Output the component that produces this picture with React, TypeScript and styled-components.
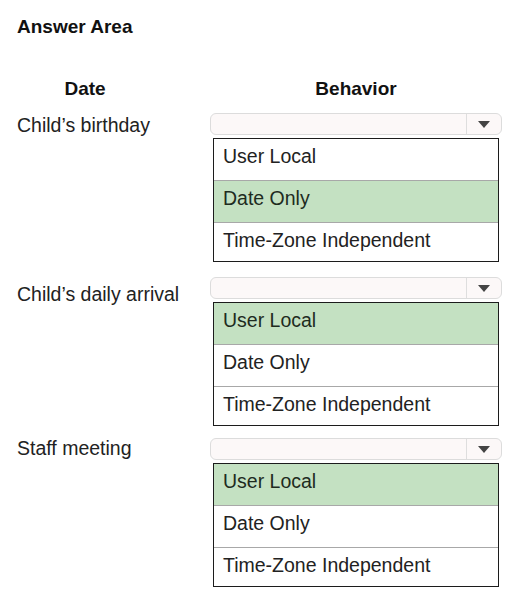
import React from "react";
import styled, { createGlobalStyle } from "styled-components";

const Global = createGlobalStyle`
  html, body { margin: 0; padding: 0; background: #ffffff; }
  body { font-family: "Liberation Sans", Arial, sans-serif; color: #222; }
`;

const Page = styled.div`
  width: 520px;
  height: 603px;
  box-sizing: border-box;
  padding: 16px 0 0 17px;
  background: #fff;
`;

const Title = styled.div`
  font-size: 19px;
  font-weight: 700;
  line-height: 22px;
  color: #111;
`;

const Grid = styled.div`
  margin-top: 40px;
  display: grid;
  grid-template-columns: 193px 292px;
  align-items: start;
`;

const HeaderRow = styled.div`
  display: contents;
`;

const DateHeader = styled.div`
  width: 136px;
  text-align: center;
  font-size: 19px;
  font-weight: 700;
  line-height: 22px;
  color: #111;
`;

const BehaviorHeader = styled.div`
  text-align: center;
  font-size: 19px;
  font-weight: 700;
  line-height: 22px;
  color: #111;
`;

const Label = styled.div<{ $offset: number }>`
  font-size: 19.5px;
  line-height: 22px;
  color: #222;
  margin-top: ${(p) => p.$offset}px;
`;

const Control = styled.div<{ $top: number }>`
  margin-top: ${(p) => p.$top}px;
  display: flex;
  flex-direction: column;
  gap: 3px;
`;

const Select = styled.div`
  height: 22px;
  box-sizing: border-box;
  border: 1px solid #dcdcdc;
  border-radius: 6px;
  background: #fcf8f8;
  display: flex;
`;

const SelectField = styled.div`
  flex: 1;
`;

const SelectButton = styled.div`
  width: 34px;
  border-left: 1px solid #dedede;
  display: flex;
  align-items: center;
  justify-content: center;
`;

const Arrow = styled.span`
  width: 0;
  height: 0;
  border-left: 6.5px solid transparent;
  border-right: 6.5px solid transparent;
  border-top: 7px solid #444;
  margin-top: 1px;
`;

const List = styled.div`
  margin: 0 3px;
  border: 1px solid #1c1c1c;
  display: flex;
  flex-direction: column;
`;

const Option = styled.div<{ $selected: boolean; $h: number }>`
  height: ${(p) => p.$h}px;
  box-sizing: border-box;
  padding: 6px 0 0 9px;
  font-size: 19.5px;
  line-height: 22px;
  color: ${(p) => (p.$selected ? "#1e2b1e" : "#222")};
  background: ${(p) => (p.$selected ? "#c4e1c2" : "#fff")};
  & + & {
    border-top: 1px solid #a8a8a8;
  }
`;

const OPTIONS = ["User Local", "Date Only", "Time-Zone Independent"];
const HEIGHTS = [41, 42, 39];

const rows = [
  { label: "Child’s birthday", selected: 1, offset: 1, top: 13 },
  { label: "Child’s daily arrival", selected: 0, offset: 6, top: 15 },
  { label: "Staff meeting", selected: 0, offset: -1, top: 12 },
];

export default function App() {
  return (
    <>
      <Global />
      <Page>
        <Title>Answer Area</Title>
        <Grid>
          <HeaderRow>
            <DateHeader>Date</DateHeader>
            <BehaviorHeader>Behavior</BehaviorHeader>
          </HeaderRow>
          {rows.map((r) => (
            <React.Fragment key={r.label}>
              <Label $offset={r.top + r.offset}>{r.label}</Label>
              <Control $top={r.top}>
                <Select>
                  <SelectField />
                  <SelectButton>
                    <Arrow />
                  </SelectButton>
                </Select>
                <List>
                  {OPTIONS.map((o, i) => (
                    <Option key={o} $selected={i === r.selected} $h={HEIGHTS[i]}>
                      {o}
                    </Option>
                  ))}
                </List>
              </Control>
            </React.Fragment>
          ))}
        </Grid>
      </Page>
    </>
  );
}
